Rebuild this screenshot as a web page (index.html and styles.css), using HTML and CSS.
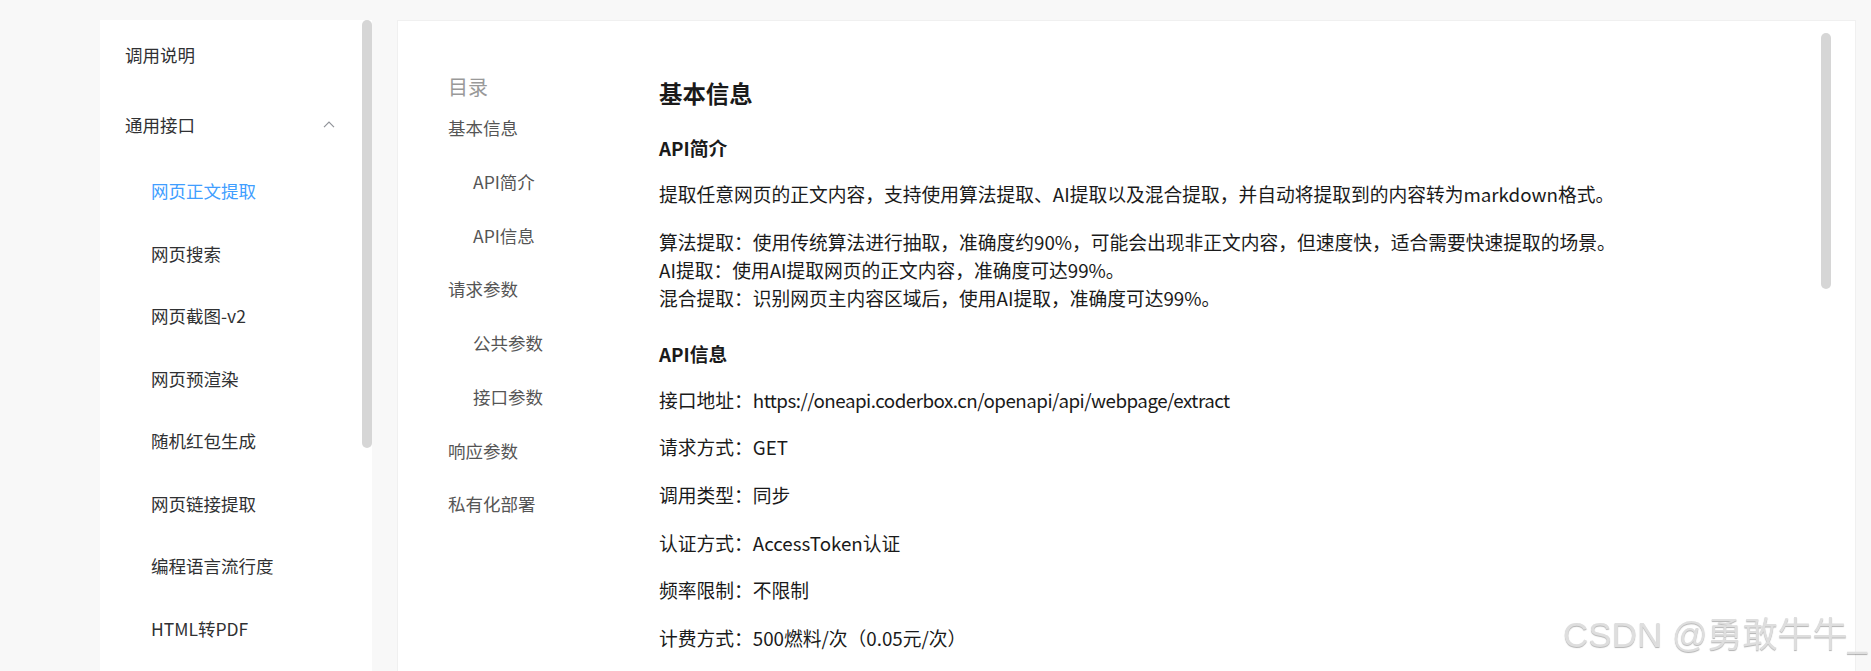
FILE: index.html
```html
<!DOCTYPE html>
<html lang="zh-CN">
<head>
    <meta charset="UTF-8">
    <meta name="viewport" content="width=device-width, initial-scale=1.0">
    <title>网页正文提取 - 接口文档</title>
    <link rel="stylesheet" href="styles.css">
</head>
<body>
    <div class="layout">
        <!-- 左侧菜单 -->
        <aside class="sidebar">
            <ul class="menu">
                <li class="menu-item">调用说明</li>
                <li class="submenu">
                    <div class="submenu-title">
                        <span>通用接口</span>
                        <svg class="arrow" width="12" height="7" viewBox="0 0 12 7">
                            <polyline points="1,6.2 6,1 11,6.2" fill="none" stroke="#909399" stroke-width="1.2"/>
                        </svg>
                    </div>
                    <ul class="submenu-list">
                        <li class="sub-item active">网页正文提取</li>
                        <li class="sub-item">网页搜索</li>
                        <li class="sub-item">网页截图-v2</li>
                        <li class="sub-item">网页预渲染</li>
                        <li class="sub-item">随机红包生成</li>
                        <li class="sub-item">网页链接提取</li>
                        <li class="sub-item">编程语言流行度</li>
                        <li class="sub-item">HTML转PDF</li>
                    </ul>
                </li>
            </ul>
            <div class="track"><div class="thumb side-thumb"></div></div>
        </aside>

        <!-- 文档内容 -->
        <main class="doc">
            <nav class="toc">
                <div class="toc-title">目录</div>
                <ul>
                    <li>基本信息</li>
                    <li class="lv2">API简介</li>
                    <li class="lv2">API信息</li>
                    <li>请求参数</li>
                    <li class="lv2">公共参数</li>
                    <li class="lv2">接口参数</li>
                    <li>响应参数</li>
                    <li>私有化部署</li>
                </ul>
            </nav>

            <article class="article">
                <h1>基本信息</h1>
                <h2 class="first">API简介</h2>
                <p>提取任意网页的正文内容，支持使用算法提取、AI提取以及混合提取，并自动将提取到的内容转为markdown格式。</p>
                <p>算法提取：使用传统算法进行抽取，准确度约90%，可能会出现非正文内容，但速度快，适合需要快速提取的场景。<br>
                AI提取：使用AI提取网页的正文内容，准确度可达99%。<br>
                混合提取：识别网页主内容区域后，使用AI提取，准确度可达99%。</p>

                <h2>API信息</h2>
                <p>接口地址：<span class="url">https://oneapi.coderbox.cn/openapi/api/webpage/extract</span></p>
                <p>请求方式：GET</p>
                <p>调用类型：同步</p>
                <p>认证方式：AccessToken认证</p>
                <p>频率限制：不限制</p>
                <p>计费方式：500燃料/次（0.05元/次）</p>
            </article>

            <div class="thumb doc-thumb"></div>
        </main>
    </div>

    <div class="watermark">CSDN @勇敢牛牛_</div>
</body>
</html>
```

FILE: styles.css
```css
/* 基础 */
html, body {
    margin: 0;
    height: 100%;
    overflow: hidden;
}

body {
    background: #f8f8f8;
    font-family: "Noto Sans CJK SC", sans-serif;
    color: #303133;
}

ul {
    list-style: none;
    margin: 0;
    padding: 0;
}

.layout {
    display: flex;
    gap: 25px;
    height: 100%;
    padding: 20px 15px 0 100px;
    box-sizing: border-box;
}

/* 左侧菜单 */
.sidebar {
    width: 272px;
    flex: none;
    display: flex;
    background: #fff;
}

.menu {
    flex: 1;
}

.menu-item,
.submenu-title {
    height: 70px;
    line-height: 70px;
    padding-left: 25px;
    font-size: 17.5px;
}

.submenu-title {
    display: flex;
    align-items: center;
    justify-content: space-between;
    padding-right: 27px;
}

.arrow {
    display: block;
    margin-top: -2px;
}

.sub-item {
    height: 62.5px;
    line-height: 62.5px;
    padding-left: 51px;
    font-size: 17.5px;
}

.sub-item.active {
    color: #409eff;
}

.track {
    width: 10px;
}

.thumb {
    width: 10px;
    background: #d6d6d6;
    border-radius: 5px;
}

.side-thumb {
    height: 428px;
}

/* 文档卡片 */
.doc {
    flex: 1;
    display: flex;
    position: relative;
    background: #fff;
    border: 1px solid #f0f0f0;
    border-bottom: none;
}

.doc-thumb {
    position: absolute;
    top: 12px;
    right: 24px;
    height: 256px;
}

/* 目录 */
.toc {
    width: 211px;
    flex: none;
    padding: 52px 0 0 50px;
}

.toc-title {
    font-size: 20px;
    line-height: 28px;
    color: #999;
}

.toc li {
    height: 53.75px;
    line-height: 53.75px;
    font-size: 17.5px;
    color: #555;
}

.toc li.lv2 {
    padding-left: 25px;
}

/* 正文 */
.article {
    flex: 1;
    padding-top: 56px;
    color: #1a1a1a;
    font-size: 18.75px;
}

.article h1 {
    margin: 0;
    font-size: 23.4px;
    line-height: 32px;
}

.article h2 {
    margin: 28px 0 18px;
    font-size: 18.75px;
    line-height: 28px;
}

.article h2.first {
    margin-top: 25px;
}

.article p {
    margin: 0 0 19.7px;
    line-height: 28px;
}

.url {
    letter-spacing: -0.5px;
}

/* 水印 */
.watermark {
    position: fixed;
    right: 4px;
    bottom: 16px;
    font-family: "Liberation Sans", "Noto Sans CJK SC", sans-serif;
    font-size: 35px;
    line-height: 40px;
    color: #dedede;
    text-shadow: 0 1px 1px rgba(0, 0, 0, 0.3);
    pointer-events: none;
}
```
